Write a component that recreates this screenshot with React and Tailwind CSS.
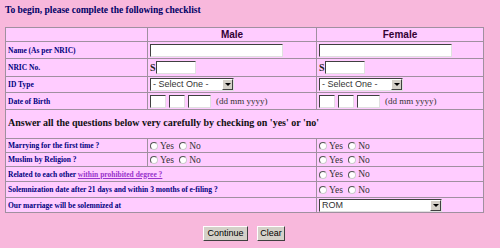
const serif = { fontFamily: '"Liberation Serif", "Times New Roman", serif' };

const TextBox = ({ w }) => (
  <span
    className={`inline-block h-[13px] bg-white border border-t-[#404040] border-l-[#404040] border-r-[#e0e0e0] border-b-[#e0e0e0] align-middle ${w}`}
  />
);

const SelectBox = ({ w, text }) => (
  <span
    className={`inline-flex items-center h-[13px] bg-white border border-t-[#404040] border-l-[#404040] border-r-[#e0e0e0] border-b-[#e0e0e0] align-middle ${w}`}
  >
    <span className="flex-1 pl-[2px] text-[9px] leading-none text-[#333] font-['Liberation_Sans',Arial,sans-serif] whitespace-nowrap overflow-hidden">
      {text}
    </span>
    <span className="flex items-center justify-center w-[11px] h-[11px] bg-[#d4d0c8] border border-t-[#fff] border-l-[#fff] border-r-[#404040] border-b-[#404040]">
      <span className="w-0 h-0 border-l-[3px] border-r-[3px] border-t-[3px] border-l-transparent border-r-transparent border-t-black" />
    </span>
  </span>
);

const Radio = () => (
  <span className="inline-block w-[8px] h-[8px] rounded-full bg-white border border-t-[#555] border-l-[#555] border-r-[#ccc] border-b-[#ccc] align-middle mr-[2px]" />
);

const YesNo = () => (
  <span className="text-[9.5px] text-[#333] whitespace-nowrap" style={serif}>
    <Radio />Yes <span className="ml-[3px]" />
    <Radio />No
  </span>
);

const Label = ({ children }) => (
  <span className="text-[7.5px] font-bold text-[#000080]" style={serif}>
    {children}
  </span>
);

const Dob = () => (
  <span className="inline-flex items-center gap-[3px] align-middle">
    <TextBox w="w-[16px]" />
    <TextBox w="w-[16px]" />
    <TextBox w="w-[23px]" />
    <span className="text-[9px] text-[#333] ml-[2px]" style={serif}>
      (dd mm yyyy)
    </span>
  </span>
);

const cell =
  "border border-[#a090a0] px-[2px] py-0 bg-[#ffccff] align-middle text-[9px] leading-[10px]";
const head =
  "border border-[#a090a0] px-[2px] py-0 bg-[#ffccff] align-middle text-center text-[10px] leading-[12px] font-bold text-[#330033] font-['Liberation_Sans',Arial,sans-serif]";
const btn =
  "h-[15px] bg-[#d4d0c8] border border-t-white border-l-white border-r-[#404040] border-b-[#404040] text-[9px] leading-none text-black font-['Liberation_Sans',Arial,sans-serif]";

export default function App() {
  return (
    <div className="w-[500px] h-[248px] bg-[#f8b8dc] pt-[4px] overflow-hidden leading-[10px]">
      <div
        className="pl-[5px] text-[9.5px] font-bold text-[#000066] leading-[12px]"
        style={serif}
      >
        To begin, please complete the following checklist
      </div>

      <table className="ml-[5px] mt-[11px] w-[478px] border-collapse border border-[#808080] table-fixed">
        <colgroup>
          <col className="w-[142px]" />
          <col className="w-[169px]" />
          <col className="w-[167px]" />
        </colgroup>
        <tbody>
          <tr className="h-[14px]">
            <td className={cell} />
            <td className={head}>Male</td>
            <td className={head}>Female</td>
          </tr>
          <tr className="h-[17px]">
            <td className={cell}><Label>Name (As per NRIC)</Label></td>
            <td className={cell}><TextBox w="w-[133px]" /></td>
            <td className={cell}><TextBox w="w-[133px]" /></td>
          </tr>
          <tr className="h-[18px]">
            <td className={cell}><Label>NRIC No.</Label></td>
            <td className={cell}>
              <span className="text-[10px] font-bold text-[#222] align-middle" style={serif}>S</span>
              <TextBox w="w-[40px]" />
            </td>
            <td className={cell}>
              <span className="text-[10px] font-bold text-[#222] align-middle" style={serif}>S</span>
              <TextBox w="w-[40px]" />
            </td>
          </tr>
          <tr className="h-[16px]">
            <td className={cell}><Label>ID Type</Label></td>
            <td className={cell}><SelectBox w="w-[84px]" text="- Select One -" /></td>
            <td className={cell}><SelectBox w="w-[84px]" text="- Select One -" /></td>
          </tr>
          <tr className="h-[17px]">
            <td className={cell}><Label>Date of Birth</Label></td>
            <td className={cell}><Dob /></td>
            <td className={cell}><Dob /></td>
          </tr>
          <tr className="h-[29px]">
            <td colSpan={3} className={`${cell} align-bottom pb-[3px]`}>
              <span className="text-[10px] leading-[12px] font-bold text-[#111]" style={serif}>
                Answer all the questions below very carefully by checking on 'yes' or 'no'
              </span>
            </td>
          </tr>
          <tr className="h-[14px]">
            <td className={cell}><Label>Marrying for the first time ?</Label></td>
            <td className={cell}><YesNo /></td>
            <td className={cell}><YesNo /></td>
          </tr>
          <tr className="h-[14px]">
            <td className={cell}><Label>Muslim by Religion ?</Label></td>
            <td className={cell}><YesNo /></td>
            <td className={cell}><YesNo /></td>
          </tr>
          <tr className="h-[15px]">
            <td colSpan={2} className={cell}>
              <Label>
                Related to each other{" "}
                <span className="text-[#9933cc] underline">within prohibited degree ?</span>
              </Label>
            </td>
            <td className={cell}><YesNo /></td>
          </tr>
          <tr className="h-[16px]">
            <td colSpan={2} className={cell}>
              <Label>Solemnization date after 21 days and within 3 months of e-filing ?</Label>
            </td>
            <td className={cell}><YesNo /></td>
          </tr>
          <tr className="h-[15px]">
            <td colSpan={2} className={cell}>
              <Label>Our marriage will be solemnized at</Label>
            </td>
            <td className={cell}><SelectBox w="w-[123px]" text="ROM" /></td>
          </tr>
        </tbody>
      </table>

      <div className="ml-[5px] w-[478px] flex justify-center gap-[9px] mt-[13px]">
        <button className={`${btn} w-[45px]`}>Continue</button>
        <button className={`${btn} w-[28px]`}>Clear</button>
      </div>
    </div>
  );
}
